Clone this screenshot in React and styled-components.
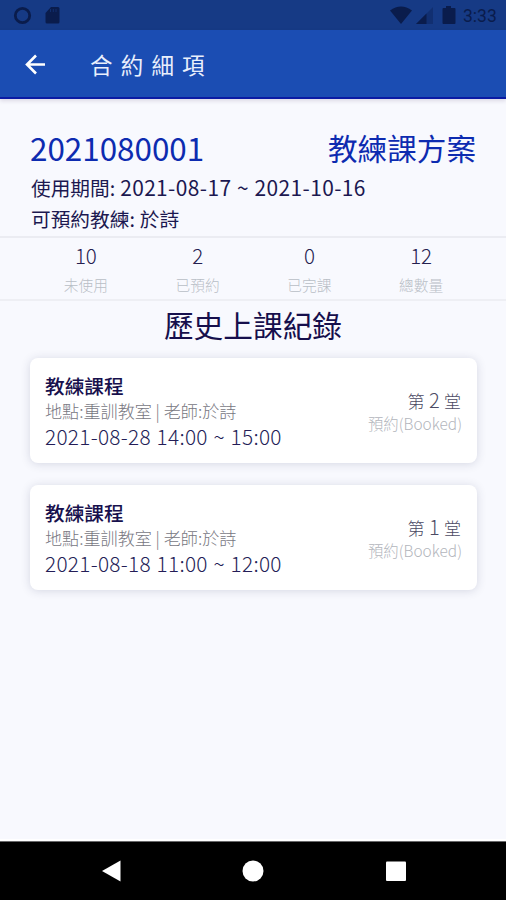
import React from 'react';
import styled, { createGlobalStyle } from 'styled-components';

const GlobalStyle = createGlobalStyle`
  * {
    box-sizing: border-box;
  }

  body {
    margin: 0;
    background: #f8f9fe;
    font-family: "Noto Sans CJK TC", sans-serif;
    color: #1c1850;
  }
`;

const Screen = styled.div`
  display: flex;
  flex-direction: column;
  width: 506px;
  height: 900px;
  overflow: hidden;
  background: #f8f9fe;
`;

const StatusBar = styled.div`
  display: flex;
  flex: none;
  justify-content: space-between;
  height: 30px;
  padding: 0 9px 0 13px;
  background: #163a85;
`;

const Clock = styled.span`
  width: 34px;
  margin-left: 7px;
  font-family: Roboto, sans-serif;
  font-size: 17.5px;
  line-height: 32px;
  color: #0a1c4c;
  white-space: nowrap;
`;

const StatusGroup = styled.div`
  display: flex;
`;

const AppBar = styled.header`
  display: flex;
  flex: none;
  align-items: center;
  height: 69px;
  padding: 0 24px;
  background: #1b4db3;
  border-bottom: 2px solid #0b1ba4;
  box-shadow: 0 2px 4px rgba(60, 30, 80, 0.14);
`;

const BarTitle = styled.h1`
  margin: 0 0 0 43px;
  font-size: 22.5px;
  font-weight: 400;
  line-height: 30px;
  letter-spacing: 8.2px;
  color: #e9effc;
`;

const Contract = styled.section`
  flex: none;
  height: 139px;
  padding: 30px 30px 0;
  border-bottom: 2px solid #ebecf2;
`;

const ContractHead = styled.div`
  display: flex;
  justify-content: space-between;
  height: 42px;
  line-height: 38px;
  color: #0d2bb0;
`;

const ContractId = styled.span`
  font-size: 31.4px;
`;

const PlanName = styled.span`
  font-size: 29.6px;
`;

const Info = styled.div`
  height: 32px;
  padding-left: 1px;
  font-size: 19.7px;
  line-height: 32px;
  word-spacing: 0.5px;
  white-space: pre;
`;

const Digits = styled.span`
  font-size: ${props => props.$size}px;
  letter-spacing: ${props => props.$spacing || 0}px;
`;

const Stats = styled.div`
  display: grid;
  flex: none;
  grid-template-columns: repeat(4, 1fr);
  height: 63px;
  padding: 1px 29px 0 30px;
  border-bottom: 2px solid #eeeff4;
  text-align: center;
`;

const StatValue = styled.div`
  font-size: 20.5px;
  font-weight: 300;
  line-height: 32px;
  color: #25204f;
`;

const StatLabel = styled.div`
  font-size: 14.7px;
  font-weight: 300;
  line-height: 27px;
  color: #b9bec6;
`;

const SectionTitle = styled.h2`
  flex: none;
  height: 57px;
  margin: 0;
  font-size: 29.7px;
  font-weight: 400;
  line-height: 47px;
  text-align: center;
  color: #160f4c;
`;

const List = styled.main`
  display: flex;
  flex: 1;
  flex-direction: column;
  gap: 22px;
  padding: 0 29px 0 30px;
`;

const Card = styled.article`
  display: flex;
  justify-content: space-between;
  height: 105px;
  padding: 14px 15px 13px;
  background: #fff;
  border-radius: 8px;
  box-shadow: 0 1px 10px rgba(40, 50, 90, 0.17);
  white-space: nowrap;
`;

const CourseName = styled.div`
  font-size: 19.7px;
  font-weight: 500;
  line-height: 28px;
  color: #17104d;
`;

const CoursePlace = styled.div`
  font-size: 17.1px;
  font-weight: 300;
  line-height: 22px;
  color: #77777f;
`;

const CourseTime = styled.div`
  font-size: 20.8px;
  font-weight: 300;
  line-height: 28px;
  letter-spacing: 0.3px;
  word-spacing: 0.8px;
  color: #241d57;
`;

const CardSide = styled.div`
  padding-top: 15px;
  text-align: right;
`;

const Lesson = styled.div`
  padding-right: 1px;
  font-size: 17px;
  font-weight: 300;
  line-height: 25px;
  word-spacing: 0.6px;
  color: #4b4a63;
`;

const BookState = styled.div`
  font-size: 15.4px;
  font-weight: 300;
  line-height: 21px;
  color: #b2b5bc;
`;

const NavBar = styled.nav`
  display: flex;
  flex: none;
  align-items: center;
  justify-content: space-between;
  height: 59px;
  padding: 0 99px 0 101px;
  background: #000;
  border-top: 1px solid #69696b;
  box-shadow: 0 -2px 0 #fff;
`;

const stats = [
  { label: '未使用', value: 10 },
  { label: '已預約', value: 2 },
  { label: '已完課', value: 0 },
  { label: '總數量', value: 12 },
];

const records = [
  { no: 2, time: '2021-08-28 14:00 ~ 15:00' },
  { no: 1, time: '2021-08-18 11:00 ~ 12:00' },
];

function App() {
  return (
    <>
      <GlobalStyle />
      <Screen>
        <StatusBar>
          <svg width="50" height="30" fill="#0a1c4c">
            <circle cx="9.5" cy="15.5" r="7.2" fill="none" stroke="#0a1c4c" strokeWidth="2.8" />
            <path d="M38 7h7q1.500 0 1.500 1.500v13.500q0 1.500-1.500 1.500H34q-1.500 0-1.500-1.500V13z" />
            <path d="M37.500 9v3M40.300 9v3M43 9v3" stroke="#163a85" strokeWidth="0.6" />
          </svg>
          <StatusGroup>
            <svg width="67" height="30" fill="#0a1c4c">
              <path d="M1 10.500Q12 2.500 23 10.500L12 24z" />
              <path d="M44 7v17H27z" opacity="0.35" />
              <path d="M37.500 13.500V24H27z" />
              <path d="M57 6h5v2h3.500q1 0 1 1v14q0 1-1 1h-11q-1 0-1-1V9q0-1 1-1H57z" />
            </svg>
            <Clock>3:33</Clock>
          </StatusGroup>
        </StatusBar>
        <AppBar>
          <svg width="23" height="22" fill="none" stroke="#fff" strokeWidth="2.6">
            <path d="M21 11.500H3M12 2.500l-9 9 9 9" />
          </svg>
          <BarTitle>合約細項</BarTitle>
        </AppBar>
        <Contract>
          <ContractHead>
            <ContractId>2021080001</ContractId>
            <PlanName>教練課方案</PlanName>
          </ContractHead>
          <Info>
            使用期間: <Digits $size={20.9} $spacing={0.4}>2021-08-17 ~ 2021-10-16</Digits>
          </Info>
          <Info>可預約教練: 於詩</Info>
        </Contract>
        <Stats>
          {stats.map(stat => (
            <div key={stat.label}>
              <StatValue>{stat.value}</StatValue>
              <StatLabel>{stat.label}</StatLabel>
            </div>
          ))}
        </Stats>
        <SectionTitle>歷史上課紀錄</SectionTitle>
        <List>
          {records.map(record => (
            <Card key={record.no}>
              <div>
                <CourseName>教練課程</CourseName>
                <CoursePlace>地點:重訓教室 | 老師:於詩</CoursePlace>
                <CourseTime>{record.time}</CourseTime>
              </div>
              <CardSide>
                <Lesson>
                  第 <Digits $size={20}>{record.no}</Digits> 堂
                </Lesson>
                <BookState>預約(Booked)</BookState>
              </CardSide>
            </Card>
          ))}
        </List>
        <NavBar>
          <svg width="20" height="22" fill="#fff">
            <path d="M1 11L19.500 0.500v21z" />
          </svg>
          <svg width="22" height="22" fill="#fff">
            <circle cx="11" cy="11" r="10.500" />
          </svg>
          <svg width="22" height="22" fill="#fff">
            <rect x="1" y="1.500" width="20" height="19.500" rx="1" />
          </svg>
        </NavBar>
      </Screen>
    </>
  );
}

export default App;
